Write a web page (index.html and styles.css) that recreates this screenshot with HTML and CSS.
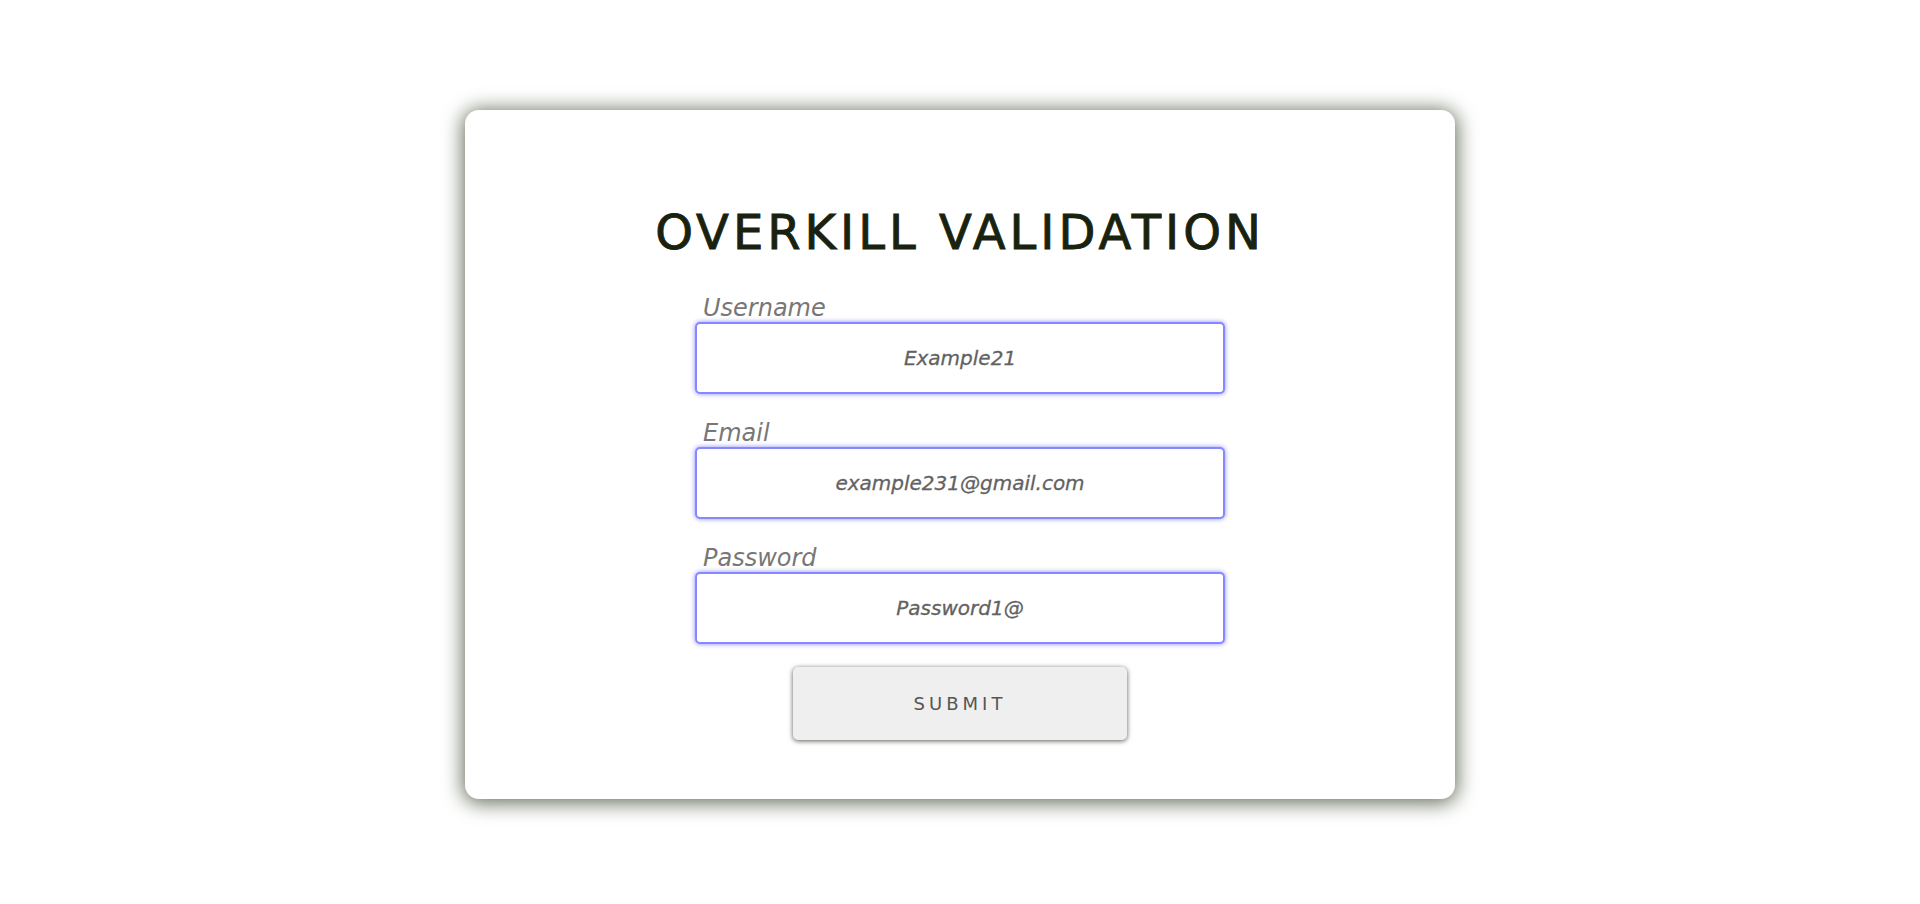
FILE: index.html
```html
<!DOCTYPE html>
<html lang="en">
<head>
<meta charset="utf-8">
<title>Overkill Validation</title>
<link rel="stylesheet" href="styles.css">
</head>
<body>
<main class="page">
  <form class="card">
    <h1 class="title">OVERKILL VALIDATION</h1>
    <div class="field">
      <label class="label" for="username">Username</label>
      <input class="input" id="username" type="text" value="Example21">
    </div>
    <div class="field">
      <label class="label" for="email">Email</label>
      <input class="input" id="email" type="text" value="example231@gmail.com">
    </div>
    <div class="field">
      <label class="label" for="password">Password</label>
      <input class="input" id="password" type="text" value="Password1@">
    </div>
    <button class="submit" type="button">SUBMIT</button>
  </form>
</main>
</body>
</html>
```
FILE: styles.css
```css
* { box-sizing: border-box; }
html, body { margin: 0; padding: 0; background: #ffffff; }
body { font-family: "DejaVu Sans", "Liberation Sans", sans-serif; }
.page {
  display: flex;
  justify-content: center;
  align-items: flex-start;
  min-height: 904px;
  padding-top: 110px;
}
.card {
  width: 990px;
  height: 689px;
  background: #ffffff;
  border-radius: 14px;
  box-shadow: 0 2px 20px 2px #646e5a;
  display: flex;
  flex-direction: column;
  align-items: center;
  padding-top: 98px;
}
.title {
  margin: 0;
  font-size: 48px;
  line-height: 48px;
  font-weight: 500;
  letter-spacing: 4px;
  color: #18220f;
  margin-bottom: 40px;
  -webkit-text-stroke: 0.9px #18220f;
}
.field {
  display: flex;
  flex-direction: column;
  width: 530px;
  margin-bottom: 27px;
}
.field:last-of-type { margin-bottom: 23px; }
.label {
  font-size: 24px;
  line-height: 24px;
  font-style: italic;
  color: #777777;
  padding-left: 8px;
  margin-bottom: 2px;
}
.input {
  width: 530px;
  height: 72px;
  border: 2px solid #8787ff;
  border-radius: 5px;
  box-shadow: 0 0 5px #8a8aff;
  font-family: inherit;
  font-size: 20px;
  font-style: italic;
  color: #626262;
  -webkit-text-stroke: 0.3px #626262;
  text-align: center;
  outline: none;
  background: #fff;
}
.submit {
  width: 334px;
  height: 73px;
  border: none;
  border-radius: 5px;
  background: #efefef;
  box-shadow: 0 1px 5px #555c50;
  font-family: inherit;
  font-size: 18px;
  letter-spacing: 4px;
  color: #555555;
}
```
